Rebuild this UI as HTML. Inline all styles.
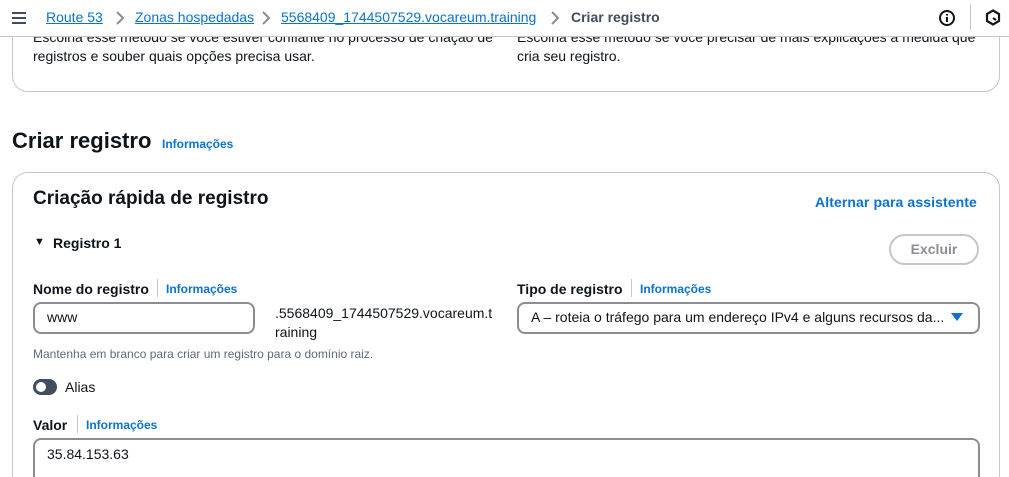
<!DOCTYPE html>
<html style="overflow:hidden;height:477px"><head><meta charset="utf-8"><style>
*{margin:0;padding:0;box-sizing:border-box}
body{width:1009px;height:477px;overflow:hidden;background:#fff;font-family:"Liberation Sans",sans-serif;color:#0f141a;position:relative;font-size:14px}
.a{position:absolute;white-space:nowrap}
.link{color:#0972d3}
.info{color:#0972d3;font-size:12px;font-weight:bold}
.lbl{font-weight:bold;font-size:14px}
.sep{position:absolute;width:1px;height:18px;background:#c6c6cd}
</style></head><body>
<div class="a" style="left:12px;top:10px;width:988px;height:82px;border:1px solid #c6c6cd;border-radius:16px"></div>
<div class="a" style="left:33px;top:29px;font-size:14px">Escolha esse método se você estiver confiante no processo de criação de</div>
<div class="a" style="left:33px;top:48px">registros e souber quais opções precisa usar.</div>
<div class="a" style="left:517px;top:29px">Escolha esse método se você precisar de mais explicações à medida que</div>
<div class="a" style="left:517px;top:48px">cria seu registro.</div>
<div class="a" style="left:0;top:0;width:1009px;height:37px;background:#fff;border-bottom:1px solid #c6c6cd"></div>
<svg class="a" style="left:11px;top:10px" width="16" height="16"><path d="M1 3h14M1 8h14M1 13h14" stroke="#414d5c" stroke-width="2"/></svg>
<div class="a link" style="left:46px;top:9px;font-size:14px;text-decoration:underline">Route 53</div>
<svg class="a" style="left:115px;top:11px" width="10" height="14"><path d="M2 1l6 6-6 6" fill="none" stroke="#8c8c94" stroke-width="2"/></svg>
<div class="a link" style="left:135px;top:9px;text-decoration:underline">Zonas hospedadas</div>
<svg class="a" style="left:261px;top:11px" width="10" height="14"><path d="M2 1l6 6-6 6" fill="none" stroke="#8c8c94" stroke-width="2"/></svg>
<div class="a link" style="left:281px;top:9px;text-decoration:underline">5568409_1744507529.vocareum.training</div>
<svg class="a" style="left:550px;top:11px" width="10" height="14"><path d="M2 1l6 6-6 6" fill="none" stroke="#8c8c94" stroke-width="2"/></svg>
<div class="a" style="left:571px;top:9px;font-weight:bold;color:#414d5c">Criar registro</div>
<svg class="a" style="left:938px;top:9px" width="18" height="18"><circle cx="9" cy="9" r="7" fill="none" stroke="#0f141a" stroke-width="2"/><path d="M9 8v5M9 5v1.5" stroke="#0f141a" stroke-width="2"/></svg>
<div class="a" style="left:970px;top:4px;width:1px;height:26px;background:#c6c6cd"></div>
<svg class="a" style="left:985px;top:9px" width="16" height="18"><path d="M8 1.5l6 3.5v7l-6 3.5-6-3.5v-7z" fill="none" stroke="#0f141a" stroke-width="2.2"/><path d="M8 9l3 2" stroke="#0f141a" stroke-width="2"/></svg>

<div class="a" style="left:12px;top:128px;font-size:22px;font-weight:bold">Criar registro</div>
<div class="a info" style="left:162px;top:137px">Informações</div>

<div class="a" style="left:12px;top:172px;width:988px;height:340px;border:1px solid #c6c6cd;border-radius:16px"></div>
<div class="a" style="left:33px;top:188px;font-size:19px;font-weight:bold">Criação rápida de registro</div>
<div class="a" style="left:815px;top:194px;color:#0972d3;font-weight:bold;font-size:14px;letter-spacing:0.1px">Alternar para assistente</div>
<div class="a" style="left:34px;top:236px;font-size:11px">▼</div>
<div class="a lbl" style="left:53px;top:235px;font-weight:bold;font-size:14px">Registro 1</div>
<div class="a" style="left:889px;top:234px;width:90px;height:31px;border:2px solid #c6c6cd;border-radius:16px;color:#8c8c94;font-weight:bold;text-align:center;line-height:27px">Excluir</div>

<div class="a lbl" style="left:33px;top:281px">Nome do registro</div>
<div class="sep" style="left:157px;top:279px"></div>
<div class="a info" style="left:166px;top:282px">Informações</div>
<div class="a" style="left:33px;top:302px;width:222px;height:32px;border:2px solid #8c8c94;border-radius:8px;padding:5px 12px">www</div>
<div class="a" style="left:275px;top:305px">.5568409_1744507529.vocareum.t</div>
<div class="a" style="left:275px;top:324px">raining</div>
<div class="a" style="left:33px;top:347px;font-size:12px;color:#5f6b7a">Mantenha em branco para criar um registro para o domínio raiz.</div>

<div class="a lbl" style="left:517px;top:281px">Tipo de registro</div>
<div class="sep" style="left:631px;top:279px"></div>
<div class="a info" style="left:640px;top:282px">Informações</div>
<div class="a" style="left:517px;top:302px;width:463px;height:32px;border:2px solid #8c8c94;border-radius:8px;padding:5px 12px;font-size:14px">A – roteia o tráfego para um endereço IPv4 e alguns recursos da...</div>
<svg class="a" style="left:951px;top:313px" width="12" height="9"><path d="M0 0h12L6 8z" fill="#0972d3"/></svg>

<div class="a" style="left:33px;top:379px;width:24px;height:16px;border-radius:8px;background:#414d5c"></div>
<div class="a" style="left:36px;top:382px;width:10px;height:10px;border-radius:5px;background:#fff"></div>
<div class="a" style="left:65px;top:379px">Alias</div>

<div class="a lbl" style="left:33px;top:417px">Valor</div>
<div class="sep" style="left:77px;top:415px"></div>
<div class="a info" style="left:86px;top:418px">Informações</div>
<div class="a" style="left:33px;top:438px;width:947px;height:70px;border:2px solid #8c8c94;border-radius:8px;padding:6px 12px">35.84.153.63</div>
</body></html>
